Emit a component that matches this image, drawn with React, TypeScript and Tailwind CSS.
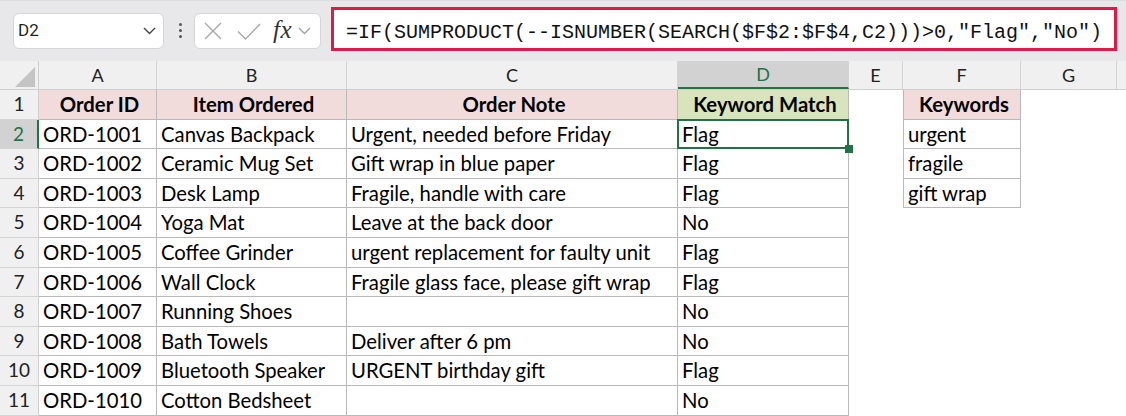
import React from "react";

const COLS = [118, 190, 331, 171, 54, 118, 96];
const LETTERS = ["A", "B", "C", "D", "E", "F", "G"];
const ROW_H = "h-[29.6px]";

type Row = [string, string, string, string, string];

const rows: Row[] = [
  ["ORD-1001", "Canvas Backpack", "Urgent, needed before Friday", "Flag", "urgent"],
  ["ORD-1002", "Ceramic Mug Set", "Gift wrap in blue paper", "Flag", "fragile"],
  ["ORD-1003", "Desk Lamp", "Fragile, handle with care", "Flag", "gift wrap"],
  ["ORD-1004", "Yoga Mat", "Leave at the back door", "No", ""],
  ["ORD-1005", "Coffee Grinder", "urgent replacement for faulty unit", "Flag", ""],
  ["ORD-1006", "Wall Clock", "Fragile glass face, please gift wrap", "Flag", ""],
  ["ORD-1007", "Running Shoes", "", "No", ""],
  ["ORD-1008", "Bath Towels", "Deliver after 6 pm", "No", ""],
  ["ORD-1009", "Bluetooth Speaker", "URGENT birthday gift", "Flag", ""],
  ["ORD-1010", "Cotton Bedsheet", "", "No", ""],
];

const cellFont = "font-['Lato',sans-serif] text-[20.3px] text-black";

function Toolbar() {
  return (
    <div className="h-[61px] bg-[#e8e8ea] border-t border-[#dcdcdf] flex items-start">
      <div className="mt-[12px] ml-[13px] w-[151px] h-[36px] bg-white border border-[#d6d6d8] rounded-[6px] flex items-center pl-[4px] pr-[7px]">
        <span className="font-['Roboto',sans-serif] text-[17px] text-[#1f1f1f] flex-1">D2</span>
        <svg width="13" height="8" viewBox="0 0 13 8" fill="none">
          <path d="M1 1l5.5 5.5L12 1" stroke="#444" strokeWidth="1.4" />
        </svg>
      </div>
      <div className="mt-[22px] ml-[14px] w-[4px] flex flex-col gap-[3px] items-center">
        <div className="w-[3px] h-[3px] rounded-full bg-[#555]" />
        <div className="w-[3px] h-[3px] rounded-full bg-[#555]" />
        <div className="w-[3px] h-[3px] rounded-full bg-[#555]" />
      </div>
      <div className="mt-[12px] ml-[12px] w-[127px] h-[36px] bg-white border border-[#d6d6d8] rounded-[6px] flex items-center pl-[9px]">
        <svg width="18" height="18" viewBox="0 0 18 18" fill="none">
          <path d="M1 1l16 16M17 1L1 17" stroke="#a8a8a8" strokeWidth="1.4" />
        </svg>
        <svg className="ml-[15px]" width="24" height="17" viewBox="0 0 24 17" fill="none">
          <path d="M1 8.5l7.5 7.5L23 1" stroke="#a8a8a8" strokeWidth="1.4" />
        </svg>
        <span className="ml-[12px] font-['Liberation_Serif',serif] italic text-[25px] leading-none text-[#333] tracking-[0.5px] -mt-[3px]">fx</span>
        <svg className="ml-[6px]" width="13" height="8" viewBox="0 0 13 8" fill="none">
          <path d="M1 1l5.5 5.5L12 1" stroke="#a0a0a0" strokeWidth="1.3" />
        </svg>
      </div>
      <div className="mt-[6px] ml-[10px] w-[786px] h-[44px] bg-white border-[3px] border-[#de1a4a] flex items-center pl-[12px] pt-[7px]">
        <span className="font-['Liberation_Mono',monospace] text-[20px] text-[#111] whitespace-pre">
          =IF(SUMPRODUCT(--ISNUMBER(SEARCH($F$2:$F$4,C2)))&gt;0,"Flag","No")
        </span>
      </div>
    </div>
  );
}

function ColumnHeader() {
  return (
    <div className="flex h-[29px] bg-[#f0f0f0] border-b border-[#cfcfcf]">
      <div className="w-[39px] shrink-0 border-r border-[#cfcfcf] relative">
        <svg className="absolute left-[15px] top-[6px]" width="20" height="20" viewBox="0 0 20 20">
          <path d="M20 0L20 20L0 20Z" fill="#c4c4c4" />
        </svg>
      </div>
      {COLS.map((w, i) => {
        const sel = LETTERS[i] === "D";
        return (
          <div
            key={i}
            style={{ width: w }}
            className={
              "shrink-0 flex items-center justify-center border-r border-[#d4d4d4] font-['Lato',sans-serif] text-[18px] " +
              (sel ? "bg-[#d2d2d2] text-[#217346] border-b-2 border-b-[#217346]" : "text-[#222]")
            }
          >
            {LETTERS[i]}
          </div>
        );
      })}
      <div className="flex-1" />
    </div>
  );
}

function RowNum({ n, sel }: { n: number; sel?: boolean }) {
  return (
    <div
      className={
        "w-[39px] shrink-0 flex items-center justify-center border-b border-[#d4d4d4] font-['Lato',sans-serif] text-[19px] " +
        (sel
          ? "bg-[#d2d2d2] text-[#217346] border-r-2 border-r-[#217346]"
          : "bg-[#f0f0f0] text-[#222] border-r border-r-[#cfcfcf]")
      }
    >
      {n}
    </div>
  );
}

function Cell({
  w,
  children,
  cls = "",
  bordered = true,
}: {
  w: number;
  children?: React.ReactNode;
  cls?: string;
  bordered?: boolean;
}) {
  return (
    <div
      style={{ width: w }}
      className={
        "shrink-0 flex items-center pl-[4px] overflow-visible whitespace-nowrap " +
        cellFont +
        " " +
        (bordered ? "border-r border-b border-[#b9b9b9] " : "") +
        cls
      }
    >
      {children}
    </div>
  );
}

function HeaderRow() {
  const pink = "bg-[#f2dcdb] font-bold justify-center pl-0";
  return (
    <div className={"flex " + ROW_H}>
      <RowNum n={1} />
      <Cell w={COLS[0]} cls={pink}>Order ID</Cell>
      <Cell w={COLS[1]} cls={pink}>Item Ordered</Cell>
      <Cell w={COLS[2]} cls={pink}>Order Note</Cell>
      <Cell w={COLS[3]} cls="bg-[#d8e4bc] font-bold justify-center pl-0">Keyword Match</Cell>
      <Cell w={COLS[4]} bordered={false} />
      <Cell w={COLS[5]} cls={pink + " border-l"}>Keywords</Cell>
      <Cell w={COLS[6]} bordered={false} />
      <div className="flex-1" />
    </div>
  );
}

function DataRow({ r, i }: { r: Row; i: number }) {
  const n = i + 2;
  const selected = n === 2;
  return (
    <div className={"flex " + ROW_H + (selected ? " relative z-10" : "")}>
      <RowNum n={n} sel={selected} />
      <Cell w={COLS[0]}>{r[0]}</Cell>
      <Cell w={COLS[1]}>{r[1]}</Cell>
      <Cell w={COLS[2]}>{r[2]}</Cell>
      <Cell w={COLS[3]} cls="relative">
        {r[3]}
        {selected && (
          <>
            <div className="absolute left-[-1px] top-[-1px] right-[-1px] bottom-[-1px] border-2 border-[#217346] pointer-events-none" />
            <div className="absolute right-[-5px] bottom-[-5px] w-[8px] h-[8px] bg-[#217346]" />
          </>
        )}
      </Cell>
      <Cell w={COLS[4]} bordered={false} />
      {n <= 4 ? (
        <Cell w={COLS[5]} cls="border-l">{r[4]}</Cell>
      ) : (
        <Cell w={COLS[5]} bordered={false} />
      )}
      <Cell w={COLS[6]} bordered={false} />
      <div className="flex-1" />
    </div>
  );
}

export default function App() {
  return (
    <div className="w-[1126px] h-[416px] overflow-hidden bg-white">
      <Toolbar />
      <ColumnHeader />
      <HeaderRow />
      {rows.map((r, i) => (
        <DataRow key={i} r={r} i={i} />
      ))}
    </div>
  );
}
